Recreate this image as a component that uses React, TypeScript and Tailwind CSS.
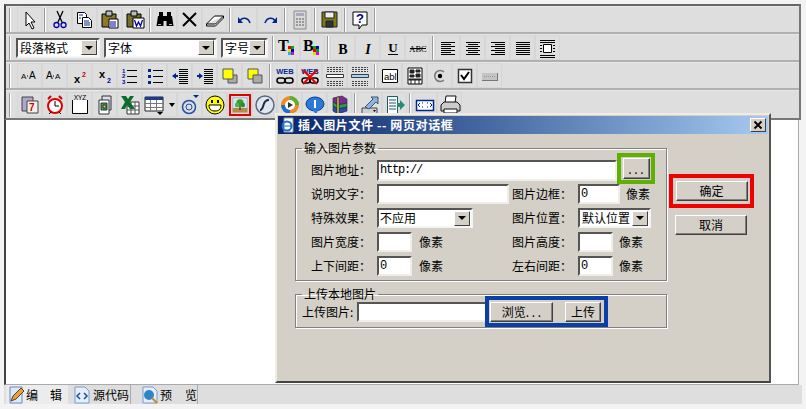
import type { ReactNode } from "react";

const lines = (x: number, w: number, ys: number[], stroke = "#000", sw = 1) =>
  ys.map((y) => <path key={y} d={`M${x} ${y + 0.5}h${w}`} stroke={stroke} strokeWidth={sw} />);

const dotted = (ys: number[]) =>
  ys.map((y) => <path key={y} d={`M3 ${y + 0.5}h16`} stroke="#444" strokeDasharray="2 1" />);

// all toolbar icons are drawn on a 22x22 box
const icons: Record<string, ReactNode> = {
  cursor: <path d="M7 3v14l3-3 3 6 2-1-3-6h4z" fill="#fff" stroke="#000" />,
  cut: (
    <g fill="none">
      <path d="M8 2l5 11M14 2L9 13" stroke="#000" strokeWidth="1.300" />
      <circle cx="7.500" cy="16" r="2.500" stroke="#00a" strokeWidth="1.300" />
      <circle cx="14.500" cy="16" r="2.500" stroke="#00a" strokeWidth="1.300" />
    </g>
  ),
  copy: (
    <g stroke="#000" fill="#fff">
      <path d="M3.500 3.500h7l2 2v9h-9z" />
      <path d="M8.500 8.500h6l3 3v7h-9z" />
      <path d="M5 6h4M5 9h2M10 12h5M10 14h6M10 16h6" fill="none" stroke="#00288c" />
    </g>
  ),
  paste: (
    <g stroke="#000">
      <path d="M3 5h14v13H3z" fill="#8c7a2a" />
      <path d="M7 2h6v5H7z" fill="#bbb" />
      <path d="M10 10h9v9h-9z" fill="#fff" />
      <path d="M11 13h6M11 15h6M11 17h6" stroke="#00a" />
    </g>
  ),
  pasteword: (
    <g stroke="#000">
      <path d="M3 5h14v13H3z" fill="#77702a" />
      <path d="M7 2h6v5H7z" fill="#bbb" />
      <path d="M9 9h11v10H9z" fill="#fff" />
      <path d="M10.500 11l2 6 2-4 2 4 2-6" fill="none" stroke="#00a" strokeWidth="1.300" />
    </g>
  ),
  find: (
    <g fill="#000">
      <path d="M5 3h4v5H5zM13 3h4v5h-4zM9 7h4v5H9z" />
      <path d="M4 7h5.500v10H2.500zM12.500 7H18l1.500 10h-7z" />
      <path d="M4 15h3v1H4zM15 15h3v1h-3z" fill="#bbb" />
    </g>
  ),
  del: <path d="M4 4l13 13M17 4L4 17" stroke="#000" strokeWidth="2" />,
  eraser: <path d="M2.500 15l8-8h9l-8 8zM2.500 15v2h9l8-8V7" fill="#fff" stroke="#000" />,
  undo: (
    <g>
      <path d="M4 8v6h5z" fill="#00288c" />
      <path d="M6 12c2-4 8-4 10 2" fill="none" stroke="#00288c" strokeWidth="1.600" />
    </g>
  ),
  redo: (
    <g>
      <path d="M18 8v6h-5z" fill="#00288c" />
      <path d="M16 12c-2-4-8-4-10 2" fill="none" stroke="#00288c" strokeWidth="1.600" />
    </g>
  ),
  calc: (
    <g>
      <path d="M5 2h12v18H5z" fill="#d8d8d8" stroke="#888" />
      <path d="M7 4h8v3H7z" fill="#aab" />
      <path d="M7 9h2v2H7zM10 9h2v2h-2zM13 9h2v2h-2zM7 12h2v2H7zM10 12h2v2h-2zM13 12h2v2h-2zM7 15h2v2H7zM10 15h2v2h-2zM13 15h2v2h-2z" fill="#999" />
    </g>
  ),
  save: (
    <g stroke="#222">
      <path d="M3 3h15v15H3z" fill="#7d7a16" />
      <path d="M6 3h9v6H6z" fill="#eee" />
      <path d="M7 12h7v6H7z" fill="#333" />
    </g>
  ),
  help: (
    <g>
      <path d="M4 3h14v13h-5l-3 4v-4H4z" fill="#fff" stroke="#000" />
      <text x="11" y="14" textAnchor="middle" fontSize="13" fontWeight="700" fill="#00008c" fontFamily="Liberation Sans">?</text>
    </g>
  ),
  colorT: (
    <g>
      <text x="1" y="14" fontSize="16" fontWeight="700" fontFamily="Liberation Serif">T</text>
      <path d="M11 9h3v3h-3z" fill="#e00" />
      <path d="M14 9h3v3h-3z" fill="#0a0" />
      <path d="M11 12h3v3h-3z" fill="#dd0" />
      <path d="M14 12h3v3h-3z" fill="#00d" />
      <path d="M11 15h3v3h-3z" fill="#0cc" />
      <path d="M14 15h3v3h-3z" fill="#d0d" />
    </g>
  ),
  colorB: (
    <g>
      <text x="1" y="14" fontSize="16" fontWeight="700" fontFamily="Liberation Serif">B</text>
      <path d="M11 9h3v3h-3z" fill="#0a0" />
      <path d="M14 9h3v3h-3z" fill="#00d" />
      <path d="M11 12h3v3h-3z" fill="#e00" />
      <path d="M14 12h3v3h-3z" fill="#0a0" />
      <path d="M11 15h3v3h-3z" fill="#dd0" />
      <path d="M14 15h3v3h-3z" fill="#d0d" />
    </g>
  ),
  bold: <text x="11" y="17" textAnchor="middle" fontSize="14" fontWeight="700" fontFamily="Liberation Serif">B</text>,
  italic: <text x="11" y="17" textAnchor="middle" fontSize="14" fontWeight="700" fontStyle="italic" fontFamily="Liberation Serif">I</text>,
  underline: (
    <g>
      <text x="11" y="15" textAnchor="middle" fontSize="13" fontWeight="700" fontFamily="Liberation Serif">U</text>
      <path d="M6 17.500h10" stroke="#000" />
    </g>
  ),
  strike: (
    <g>
      <text x="11" y="15" textAnchor="middle" fontSize="8.500" fontFamily="Liberation Serif">ABC</text>
      <path d="M3 11.500h16" stroke="#000" />
    </g>
  ),
  left: <g>{lines(4, 14, [5, 9, 13, 17])}{lines(4, 10, [7, 11, 15])}</g>,
  center: <g>{lines(4, 14, [5, 9, 13, 17])}{lines(6, 10, [7, 11, 15])}</g>,
  right: <g>{lines(4, 14, [5, 9, 13, 17])}{lines(8, 10, [7, 11, 15])}</g>,
  justify: <g>{lines(4, 14, [5, 7, 9, 11, 13, 15, 17], "#000", 1)}</g>,
  frame: (
    <g>
      {lines(3, 15, [3, 5, 18, 20])}
      {lines(3, 2, [8, 11, 14])}
      {lines(16, 2, [8, 11, 14])}
      <path d="M6.500 7.500h8v8h-8z" fill="#fff" stroke="#000" />
    </g>
  ),
  bigA: (
    <g fontFamily="Liberation Sans" fontSize="8">
      <text x="2" y="14">A</text>
      <path d="M8 10.500h1v1H8z" />
      <text x="10" y="14" fontSize="10">A</text>
    </g>
  ),
  smallA: (
    <g fontFamily="Liberation Sans" fontSize="10">
      <text x="2" y="14">A</text>
      <path d="M9 10.500h1v1H9z" />
      <text x="11" y="14" fontSize="8">A</text>
    </g>
  ),
  sup: (
    <g fontFamily="Liberation Sans" fontWeight="700">
      <text x="5" y="18" fontSize="11">x</text>
      <text x="13" y="12" fontSize="7" fill="#c00">2</text>
    </g>
  ),
  sub: (
    <g fontFamily="Liberation Sans" fontWeight="700">
      <text x="5" y="13" fontSize="11">x</text>
      <text x="13" y="18" fontSize="7" fill="#00a">2</text>
    </g>
  ),
  ol: (
    <g>
      <text x="3" y="8" fontSize="6" fontWeight="700" fill="#00a" fontFamily="Liberation Sans">1</text>
      <text x="3" y="13" fontSize="6" fontWeight="700" fill="#00a" fontFamily="Liberation Sans">2</text>
      <text x="3" y="19" fontSize="6" fontWeight="700" fill="#00a" fontFamily="Liberation Sans">3</text>
      {lines(8, 10, [5, 11, 17])}
    </g>
  ),
  ul: (
    <g>
      <path d="M4 4h3v3H4zM4 10h3v3H4zM4 16h3v3H4z" fill="#00288c" />
      {lines(9, 10, [5, 11, 17])}
    </g>
  ),
  outdent: (
    <g>
      {lines(10, 9, [4, 6, 8, 10, 12, 14, 16, 18])}
      <path d="M3 11l4-3v2h2v2H7v2z" fill="#00288c" />
    </g>
  ),
  indent: (
    <g>
      {lines(10, 9, [4, 6, 8, 10, 12, 14, 16, 18])}
      <path d="M9 11L5 8v2H3v2h2v2z" fill="#00288c" />
    </g>
  ),
  front: (
    <g stroke="#555">
      <path d="M9 10h9v8H9z" fill="#aaa" />
      <path d="M4 4h10v10H4z" fill="#ff0" />
    </g>
  ),
  back: (
    <g stroke="#555">
      <path d="M4 4h10v10H4z" fill="#ff0" />
      <path d="M9 10h9v8H9z" fill="#aaa" />
    </g>
  ),
  link: (
    <g>
      <text x="11" y="9" textAnchor="middle" fontSize="7.500" fontWeight="700" fill="#00288c" fontFamily="Liberation Sans">WEB</text>
      <rect x="3" y="13" width="8" height="5" rx="2.500" fill="none" stroke="#000" strokeWidth="1.500" />
      <rect x="11" y="13" width="8" height="5" rx="2.500" fill="none" stroke="#000" strokeWidth="1.500" />
    </g>
  ),
  unlink: (
    <g>
      <text x="11" y="9" textAnchor="middle" fontSize="7.500" fontWeight="700" fill="#00288c" fontFamily="Liberation Sans">WEB</text>
      <rect x="3" y="13" width="8" height="5" rx="2.500" fill="none" stroke="#000" strokeWidth="1.500" />
      <rect x="11" y="13" width="8" height="5" rx="2.500" fill="none" stroke="#000" strokeWidth="1.500" />
      <path d="M4 5l14 14M18 5L4 19" stroke="#e00" strokeWidth="2" />
    </g>
  ),
  hrOn: (
    <g>
      {dotted([2, 4, 6, 16, 18, 20])}
      <path d="M2.500 9.500h17v3h-17z" fill="#fff" stroke="#333" />
    </g>
  ),
  hrOff: (
    <g>
      {dotted([2, 4, 6, 16, 18, 20])}
      <path d="M2.500 9.500h17v3h-17z" fill="#bcd" stroke="#246" />
    </g>
  ),
  textbox: (
    <g>
      <path d="M3.500 4.500h15v13h-15z" fill="#fff" stroke="#000" />
      <text x="5" y="15" fontSize="9.500" fontFamily="Liberation Sans">abl</text>
    </g>
  ),
  grid: (
    <g>
      <path d="M4 3h14v16H4z" fill="#fff" stroke="#000" />
      <path d="M6 5h4v3H6zM12 5h4v2h-4zM6 10h4v2H6zM12 9h4v3h-4zM5 14h12v1H5zM7 14v5M11 14v5M15 14v5" stroke="#222" fill="#222" />
    </g>
  ),
  radio: (
    <g>
      <path d="M15 7a5.500 5.500 0 1 0 0 8" fill="none" stroke="#777" strokeWidth="1.500" />
      <circle cx="11" cy="11" r="2.200" fill="#000" />
    </g>
  ),
  check: (
    <g>
      <path d="M4.500 4.500h13v13h-13z" fill="#fff" stroke="#333" strokeWidth="1.500" />
      <path d="M7 10l3 4 5-7" fill="none" stroke="#000" strokeWidth="2" />
    </g>
  ),
  button: (
    <g>
      <path d="M3 8h15v7H3z" fill="#c4c4c4" />
      <path d="M3 15.500h16M18.500 8v8" stroke="#777" />
      <path d="M5 11.500h11" stroke="#999" strokeDasharray="1 1" />
    </g>
  ),
  calendar: (
    <g>
      <path d="M3 3h11v14H3z" fill="#aac" stroke="#444" />
      <path d="M8 7h11v12H8z" fill="#f4f0e8" stroke="#444" />
      <text x="10" y="17" fontSize="10" fontWeight="700" fill="#c00" fontFamily="Liberation Sans">7</text>
    </g>
  ),
  clock: (
    <g>
      <path d="M4 5l3-3M18 5l-3-3" stroke="#c00" strokeWidth="2" />
      <circle cx="11" cy="12" r="7" fill="#fff" stroke="#d00" strokeWidth="2" />
      <path d="M11 7v5h4" fill="none" stroke="#000" />
      <path d="M5 20l2-2M17 20l-2-2" stroke="#000" />
    </g>
  ),
  marquee: (
    <g>
      <path d="M3.500 6v13.500h15V6" fill="#fff" stroke="#000" />
      <text x="11" y="6" textAnchor="middle" fontSize="6.500" fontFamily="Liberation Sans">XYZ</text>
    </g>
  ),
  doc: (
    <g stroke="#333">
      <path d="M8 2h9v14H8z" fill="#dde" />
      <path d="M5 6h10v14H5z" fill="#fff" />
      <path d="M7 9h6v7H7z" fill="#2a7" />
      <path d="M9 11h3v3H9z" fill="#fc0" />
    </g>
  ),
  excel: (
    <g>
      <path d="M8 8h12v12H8z" fill="#fff" stroke="#333" />
      <path d="M8 12h12M8 16h12M12 8v12M16 8v12" stroke="#555" />
      <path d="M2 2h5l2 3 2-3h4l-4 6 5 7h-5l-3-4-2 4H2l4-7z" fill="#0a6d2a" />
    </g>
  ),
  table: (
    <g>
      <path d="M2 3h18v14H2z" fill="#fff" stroke="#222" />
      <path d="M2 3h18v3H2z" fill="#1e3a8a" />
      <path d="M2 9.500h18M2 13.500h18M7.500 6v11M13.500 6v11" stroke="#777" />
      <path d="M14 18h6l-3 3z" fill="#000" />
    </g>
  ),
  at: (
    <g fill="none">
      <path d="M14 1h6l-3 3z" fill="#00288c" />
      <circle cx="10" cy="13" r="6.500" stroke="#1e4fa8" strokeWidth="1.500" />
      <circle cx="10" cy="13" r="3" stroke="#1e4fa8" />
    </g>
  ),
  smile: (
    <g>
      <circle cx="11" cy="11" r="9" fill="#ff0" stroke="#000" />
      <path d="M7 6h2v3H7zM13 6h2v3h-2z" />
      <path d="M5 11h12c0 5-3 6-6 6s-6-1-6-6z" fill="#fff" stroke="#000" />
    </g>
  ),
  tree: (
    <g>
      <path d="M1 1h20v20H1z" fill="#cfe6f5" stroke="#9aa" />
      <path d="M1 15h20v6H1z" fill="#b58a4c" />
      <path d="M10 12h2v6h-2z" fill="#5a3a16" />
      <circle cx="11" cy="8" r="5" fill="#3c9a2a" />
      <circle cx="7" cy="11" r="3" fill="#52b23c" />
      <circle cx="15" cy="11" r="3" fill="#2f8a22" />
    </g>
  ),
  flash: (
    <g>
      <circle cx="11" cy="11" r="9" fill="#dfe6ee" stroke="#5a6a84" strokeWidth="1.500" />
      <path d="M15 6c-4 0-5 3-5.500 5S8 16 6 16" fill="none" stroke="#1d2a44" strokeWidth="2" />
    </g>
  ),
  media: (
    <g>
      <circle cx="11" cy="11" r="9" fill="#f08a1c" />
      <path d="M11 2a9 9 0 0 1 9 9h-9z" fill="#58b030" />
      <path d="M2 11a9 9 0 0 0 9 9v-9z" fill="#1e6fd0" />
      <circle cx="11" cy="11" r="5" fill="#fff" />
      <path d="M9 8l5 3-5 3z" fill="#333" />
    </g>
  ),
  bubble: (
    <g>
      <ellipse cx="11" cy="10" rx="9" ry="7" fill="#2a78d8" stroke="#0b3e8c" />
      <path d="M9 16l3 5 2-5z" fill="#2a78d8" />
      <path d="M10 6h2v8h-2z" fill="#fff" />
    </g>
  ),
  rar: (
    <g stroke="#222" strokeWidth=".6">
      <path d="M4 4l9-2 5 3v4L9 11 4 8z" fill="#7a2a9c" />
      <path d="M4 8l5 3 9-2v4l-9 2-5-3z" fill="#2a9c4a" />
      <path d="M4 12l5 3 9-2v4l-9 3-5-3z" fill="#2a4ab0" />
      <path d="M8 3h2v17H8z" fill="#e8d040" />
    </g>
  ),
  imp: (
    <g>
      <path d="M3 14h15v6H3z" fill="#d0d0d0" stroke="#444" />
      <path d="M14 16h3l-1.500 2z" fill="#000" />
      <path d="M6 13l8-8-2-2h7v7l-2-2-7 7z" fill="#8ab4e8" stroke="#456" />
    </g>
  ),
  exp: (
    <g>
      <path d="M3.500 2.500h10v17h-10z" fill="#fff" stroke="#1a5a6a" />
      <path d="M5 6h7M5 9h7M5 12h7M5 15h7" stroke="#1a5a6a" />
      <path d="M13 9h3V6l5 5-5 5v-3h-3z" fill="#2a8a7a" />
    </g>
  ),
  ticket: (
    <g>
      <path d="M2.500 6.500h17v10h-17z" fill="#fff" stroke="#00288c" strokeWidth="1.500" />
      <path d="M6 9l-2 2 2 2M16 9l2 2-2 2M8 9h1M8 13h1M13 9h1M13 13h1" stroke="#00288c" fill="none" />
    </g>
  ),
  print: (
    <g stroke="#111">
      <path d="M7 2h10l-1 7H6z" fill="#fff" />
      <path d="M2 11l3-3h13l3 3v6H2z" fill="#ccc" />
      <path d="M5 15h13v4H5z" fill="#fff" />
    </g>
  ),
};

function Btn({ name, wide, hot }: { name: string; wide?: boolean; hot?: boolean }) {
  return (
    <div
      className={`flex h-[25px] shrink-0 items-center border border-[#d6d6d6] bg-[#dedede] ${wide ? "w-[35px]" : "w-[25px] justify-center"}`}
    >
      {hot ? (
        <div className="flex h-[22px] w-[22px] items-center justify-center border-2 border-[#e00000]">
          <svg width="16" height="16" viewBox="0 0 22 22">{icons[name]}</svg>
        </div>
      ) : (
        <svg width="22" height="22" viewBox="0 0 22 22" className="shrink-0">
          {icons[name]}
        </svg>
      )}
      {wide && <span className="ml-[4px] h-0 w-0 border-x-[3px] border-t-[4px] border-x-transparent border-t-black" />}
    </div>
  );
}

function Sep() {
  return (
    <div className="flex h-[24px] w-[5px] shrink-0 justify-center">
      <div className="h-full w-[2px] border-l border-r border-l-[#9a9a9a] border-r-white" />
    </div>
  );
}

function Row({ children, last }: { children: ReactNode; last?: boolean }) {
  return (
    <div
      className={`flex h-[28px] items-center pl-[3px] ${last ? "" : "border-b-2 border-b-[#b0b0b0]"} border-t border-t-[#e8e8e8]`}
    >
      <div className="mr-[6px] h-[24px] w-[2px] shrink-0 border-l border-r border-l-[#9a9a9a] border-r-white" />
      {children}
    </div>
  );
}

function Arrow() {
  return (
    <span className="flex h-[15px] w-[16px] shrink-0 items-center justify-center border border-t-white border-l-white border-r-[#404040] border-b-[#404040] bg-[#d4d0c8]">
      <span className="h-0 w-0 border-x-[4px] border-t-[4px] border-x-transparent border-t-black" />
    </span>
  );
}

function Select({ label, w, pad = "pl-[2px]" }: { label: string; w: string; pad?: string }) {
  return (
    <div className={`flex h-[20px] shrink-0 items-center justify-between border-2 border-t-[#555] border-l-[#555] border-r-[#f4f4f4] border-b-[#f4f4f4] bg-white pr-[1px] text-[12px] ${w} ${pad}`}>
      <span className="leading-none">{label}</span>
      <Arrow />
    </div>
  );
}

function Input({ w, value, mono }: { w: string; value?: string; mono?: boolean }) {
  return (
    <div
      className={`flex h-[20px] shrink-0 items-center border-2 border-t-[#555] border-l-[#555] border-r-[#f0eee8] border-b-[#f0eee8] bg-white pl-[1px] [font-family:'Liberation_Mono',monospace] text-[12px] tracking-[-1.2px] ${w} ${mono ? "h-[21px]" : ""}`}
    >
      {value}
    </div>
  );
}

function WinBtn({ label, w, h = "h-[20px]" }: { label: string; w: string; h?: string }) {
  return (
    <div className={`flex shrink-0 items-center justify-center border border-t-white border-l-white border-r-[#404040] border-b-[#404040] bg-[#d4d0c8] text-[12px] shadow-[inset_-1px_-1px_0_#808080] ${w} ${h}`}>
      {label}
    </div>
  );
}

function Tab({ glyph, label, w, labelClass, active }: { glyph: ReactNode; label: string; w: string; labelClass: string; active?: boolean }) {
  return (
    <div className={`flex h-[19px] shrink-0 items-center text-[12px] ${w} ${active ? "bg-[#ececec]" : "border-r border-r-[#aaa]"}`}>
      <svg width="18" height="18" viewBox="0 0 18 18" className="shrink-0">{glyph}</svg>
      <span className={`whitespace-nowrap ${labelClass}`}>{label}</span>
    </div>
  );
}

export default function App() {
  return (
    <div className="h-[409px] w-[806px] overflow-hidden bg-[#f3f3f3] pt-[4px] pl-[4px] [font-family:'Noto_Sans_CJK_SC','Liberation_Sans',sans-serif] text-black">
      <div className="relative h-[380px] w-[797px]">
        <div className="border-2 border-t-[#666] border-r-[#777] border-b-[#777] border-l-[#444] bg-[#dedede]">
          <Row>
            <Btn name="cursor" />
            <Sep />
            <Btn name="cut" />
            <Btn name="copy" />
            <Btn name="paste" />
            <Btn name="pasteword" />
            <Sep />
            <Btn name="find" />
            <Btn name="del" />
            <Btn name="eraser" />
            <Sep />
            <Btn name="undo" />
            <Btn name="redo" />
            <Sep />
            <Btn name="calc" />
            <Sep />
            <Btn name="save" />
            <Sep />
            <Btn name="help" />
            <Sep />
          </Row>
          <Row>
            <Select label="段落格式" w="w-[84px] -ml-[1px]" />
            <Select label="字体" w="w-[113px] ml-[4px]" />
            <Select label="字号" w="w-[47px] ml-[4px]" />
            <div className="ml-[2px]"><Sep /></div>
            <Btn name="colorT" />
            <Btn name="colorB" />
            <Sep />
            <Btn name="bold" />
            <Btn name="italic" />
            <Btn name="underline" />
            <Btn name="strike" />
            <Sep />
            <Btn name="left" />
            <Btn name="center" />
            <Btn name="right" />
            <Btn name="justify" />
            <Btn name="frame" />
          </Row>
          <Row>
            <Btn name="bigA" />
            <Btn name="smallA" />
            <Btn name="sup" />
            <Btn name="sub" />
            <Btn name="ol" />
            <Btn name="ul" />
            <Btn name="outdent" />
            <Btn name="indent" />
            <Btn name="front" />
            <Btn name="back" />
            <Sep />
            <Btn name="link" />
            <Btn name="unlink" />
            <Btn name="hrOn" />
            <Btn name="hrOff" />
            <Sep />
            <Btn name="textbox" />
            <Btn name="grid" />
            <Btn name="radio" />
            <Btn name="check" />
            <Btn name="button" />
          </Row>
          <Row last>
            <Btn name="calendar" />
            <Btn name="clock" />
            <Btn name="marquee" />
            <Btn name="doc" />
            <Btn name="excel" />
            <Btn name="table" wide />
            <Btn name="at" />
            <Btn name="smile" />
            <Btn name="tree" hot />
            <Btn name="flash" />
            <Btn name="media" />
            <Btn name="bubble" />
            <Btn name="rar" />
            <Sep />
            <Btn name="imp" />
            <Btn name="exp" />
            <Sep />
            <Btn name="ticket" />
            <Btn name="print" />
          </Row>
        </div>

        <div className="mr-[2px] h-[265px] border-r border-b border-l-2 border-r-[#aaa] border-b-[#aaa] border-l-[#444] bg-white" />

        <div className="mr-[-1px] flex h-[19px] items-center bg-[#dedede] pl-[2px]">
          <Tab
            w="w-[62px] pl-[2px]"
            active
            label="编辑"
            labelClass="tracking-[12px]"
            glyph={
              <g>
                <path d="M2 1h12v16H2z" fill="#dfe8f8" stroke="#6a8ac0" />
                <path d="M3 15l2-5 8-8 3 3-8 8z" fill="#f0a030" stroke="#444" />
              </g>
            }
          />
          <Tab
            w="w-[63px] pl-[5px]"
            label="源代码"
            labelClass="ml-[2px]"
            glyph={
              <g>
                <path d="M2 1h10l4 4v12H2z" fill="#e6eefc" stroke="#7a9ad0" />
                <path d="M7 7l-3 3 3 3M11 7l3 3-3 3" fill="none" stroke="#1a4fa8" strokeWidth="1.500" />
              </g>
            }
          />
          <Tab
            w="w-[67px] pl-[10px]"
            label="预览"
            labelClass="ml-px tracking-[13px]"
            glyph={
              <g>
                <path d="M2 1h10l4 4v12H2z" fill="#e6eefc" stroke="#7a9ad0" />
                <circle cx="8" cy="9" r="5" fill="#2e86c8" />
                <path d="M11 12l5 5" stroke="#d08a20" strokeWidth="2" />
              </g>
            }
          />
        </div>

        {/* dialog window */}
        <div className="absolute top-[109px] left-[271px] h-[270px] w-[496px] border-2 border-t-[#efece4] border-r-[#555] border-b-[#444] border-l-[#efece4] bg-[#d4d0c8] p-px">
          <div className="flex h-[18px] items-center bg-gradient-to-r from-[#0a246a] to-[#a6caf0] pr-[2px] pl-[2px] text-[12px] font-bold text-white">
            <svg width="16" height="16" viewBox="0 0 16 16" className="shrink-0">
              <path d="M4 1h9v14H4z" fill="#fff" stroke="#999" />
              <circle cx="7" cy="9" r="4.500" fill="none" stroke="#1d6fd0" strokeWidth="2" />
              <path d="M3 9h8" stroke="#1d6fd0" />
            </svg>
            <span className="ml-[2px] tracking-[0.6px]">插入图片文件 -- 网页对话框</span>
            <div className="ml-auto flex h-[14px] w-[16px] items-center justify-center border border-t-white border-l-white border-r-[#404040] border-b-[#404040] bg-[#d4d0c8]">
              <svg width="10" height="10" viewBox="0 0 10 10">
                <path d="M1.500 1.500l7 7M8.500 1.500l-7 7" stroke="#000" strokeWidth="1.800" />
              </svg>
            </div>
          </div>

          <div className="flex pt-[7px] pl-[17px] text-[12px]">
            <div className="w-[372px] shrink-0">
              <fieldset className="h-[140px] border border-[#808080] shadow-[1px_1px_0_#fff,inset_1px_1px_0_#fff]">
                <legend className="ml-[6px] px-[2px] leading-[14px]">输入图片参数</legend>
                <div className="grid auto-rows-[24px] grid-cols-[66px_135px_66px_1fr] items-center pt-[3px] pl-[15px]">
                  <span>图片地址：</span>
                  <div className="col-span-3 flex items-center">
                    <Input w="w-[240px]" value="http://" mono />
                    <div className="-mt-[3px] flex h-[31px] w-[38px] shrink-0 items-center justify-center border-4 border-[#5fb000]">
                      <WinBtn label=". . ." w="w-[27px]" h="h-[21px]" />
                    </div>
                  </div>

                  <span>说明文字：</span>
                  <Input w="w-[132px]" />
                  <span>图片边框：</span>
                  <div className="flex items-center gap-[6px]">
                    <Input w="w-[42px]" value="0" />
                    <span>像素</span>
                  </div>

                  <span>特殊效果：</span>
                  <Select label="不应用" w="w-[96px]" pad="pl-[1px]" />
                  <span>图片位置：</span>
                  <Select label="默认位置" w="w-[73px]" />

                  <span>图片宽度：</span>
                  <div className="flex items-center gap-[7px]">
                    <Input w="w-[35px]" />
                    <span>像素</span>
                  </div>
                  <span>图片高度：</span>
                  <div className="flex items-center gap-[6px]">
                    <Input w="w-[35px]" />
                    <span>像素</span>
                  </div>

                  <span>上下间距：</span>
                  <div className="flex items-center gap-[7px]">
                    <Input w="w-[35px]" value="0" />
                    <span>像素</span>
                  </div>
                  <span>左右间距：</span>
                  <div className="flex items-center gap-[6px]">
                    <Input w="w-[35px]" value="0" />
                    <span>像素</span>
                  </div>
                </div>
              </fieldset>

              <fieldset className="mt-[6px] h-[41px] border border-[#808080] shadow-[1px_1px_0_#fff,inset_1px_1px_0_#fff]">
                <legend className="ml-[6px] px-[2px] leading-[14px]">上传本地图片</legend>
                <div className="-mt-[5px] flex items-center pl-[6px]">
                  <span className="w-[55px] shrink-0">上传图片:</span>
                  <Input w="w-[130px]" />
                  <div className="-ml-[2px] flex h-[31px] w-[123px] shrink-0 items-center border-4 border-[#0a3fa8] pl-[1px]">
                    <WinBtn label="浏览. . ." w="w-[63px]" />
                    <WinBtn label="上传" w="w-[36px] ml-[12px]" />
                  </div>
                </div>
              </fieldset>
            </div>

            <div className="ml-[2px] flex w-[85px] shrink-0 flex-col pt-[33px]">
              <div className="flex h-[34px] w-[85px] items-center justify-center border-4 border-[#f00000]">
                <WinBtn label="确定" w="w-[72px]" />
              </div>
              <WinBtn label="取消" w="w-[72px] mt-[7px] ml-[6px]" />
            </div>
          </div>
        </div>
      </div>
    </div>
  );
}
